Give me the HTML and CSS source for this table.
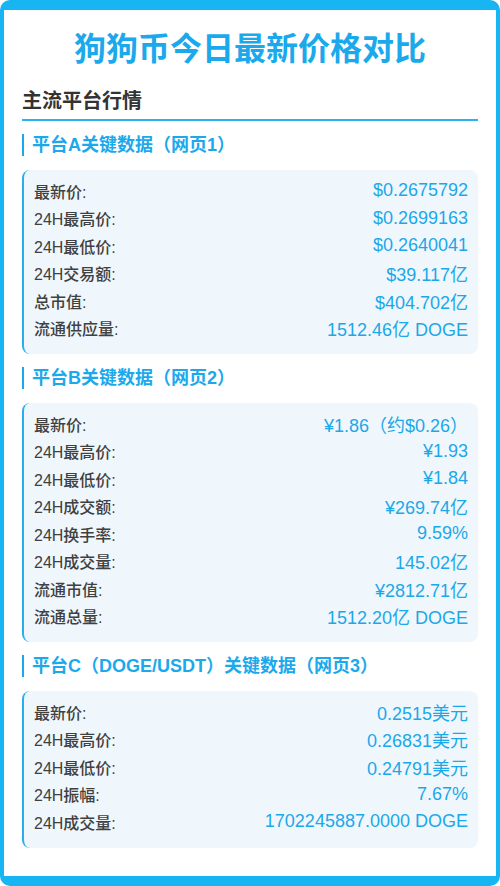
FILE: index.html
```html
<!DOCTYPE html>
<html>
  <head>
    <meta charset="utf-8">
    <title>狗狗币今日最新价格对比</title>
    <link rel="stylesheet" href="styles.css">
  </head>
  <body>
    <div class="frame">
      <h1 class="page-title">狗狗币今日最新价格对比</h1>
      <h2 class="section-title">主流平台行情</h2>

      <h3 class="platform-title">平台A关键数据（网页1）</h3>
      <div class="data-box">
        <div class="row"><span class="label">最新价:</span><span class="value">$0.2675792</span></div>
        <div class="row"><span class="label">24H最高价:</span><span class="value">$0.2699163</span></div>
        <div class="row"><span class="label">24H最低价:</span><span class="value">$0.2640041</span></div>
        <div class="row"><span class="label">24H交易额:</span><span class="value">$39.117亿</span></div>
        <div class="row"><span class="label">总市值:</span><span class="value">$404.702亿</span></div>
        <div class="row"><span class="label">流通供应量:</span><span class="value">1512.46亿 DOGE</span></div>
      </div>

      <h3 class="platform-title">平台B关键数据（网页2）</h3>
      <div class="data-box">
        <div class="row"><span class="label">最新价:</span><span class="value">¥1.86（约$0.26）</span></div>
        <div class="row"><span class="label">24H最高价:</span><span class="value">¥1.93</span></div>
        <div class="row"><span class="label">24H最低价:</span><span class="value">¥1.84</span></div>
        <div class="row"><span class="label">24H成交额:</span><span class="value">¥269.74亿</span></div>
        <div class="row"><span class="label">24H换手率:</span><span class="value">9.59%</span></div>
        <div class="row"><span class="label">24H成交量:</span><span class="value">145.02亿</span></div>
        <div class="row"><span class="label">流通市值:</span><span class="value">¥2812.71亿</span></div>
        <div class="row"><span class="label">流通总量:</span><span class="value">1512.20亿 DOGE</span></div>
      </div>

      <h3 class="platform-title">平台C（DOGE/USDT）关键数据（网页3）</h3>
      <div class="data-box">
        <div class="row"><span class="label">最新价:</span><span class="value">0.2515美元</span></div>
        <div class="row"><span class="label">24H最高价:</span><span class="value">0.26831美元</span></div>
        <div class="row"><span class="label">24H最低价:</span><span class="value">0.24791美元</span></div>
        <div class="row"><span class="label">24H振幅:</span><span class="value">7.67%</span></div>
        <div class="row"><span class="label">24H成交量:</span><span class="value">1702245887.0000 DOGE</span></div>
      </div>
    </div>
  </body>
</html>
```

FILE: styles.css
```css
body {
  margin: 0;
  background-color: #fff;
  font-family: "Liberation Sans", "Noto Sans CJK SC", sans-serif;
}

.frame {
  height: 886px;
  box-sizing: border-box;
  border: solid #17b5f2;
  border-width: 10px 4px;
  border-radius: 10px;
  padding: 19px 18px 0;
}

.page-title {
  margin: 0;
  text-align: center;
  font-size: 32px;
  line-height: 40px;
  font-weight: bold;
  color: #1ba9ec;
}

.section-title {
  margin: 18px 0 0;
  padding-bottom: 4px;
  border-bottom: 2px solid #2ab3ee;
  font-size: 20px;
  line-height: 28px;
  font-weight: bold;
  color: #333;
}

.platform-title {
  margin: 13px 0 14px;
  padding-left: 8px;
  border-left: 2px solid #1ba9ec;
  font-size: 18px;
  line-height: 22px;
  font-weight: bold;
  color: #1ba9ec;
}

.data-box {
  background-color: #eff7fd;
  border-left: 2px solid #2aaee9;
  border-radius: 8px;
  padding: 7px 10px 12px 10px;
}

.row {
  display: flex;
  justify-content: space-between;
  align-items: center;
  height: 27.5px;
}

.label {
  font-size: 16px;
  font-weight: 500;
  color: #404040;
}

.value {
  font-size: 18px;
  color: #1ca8e8;
}
```
